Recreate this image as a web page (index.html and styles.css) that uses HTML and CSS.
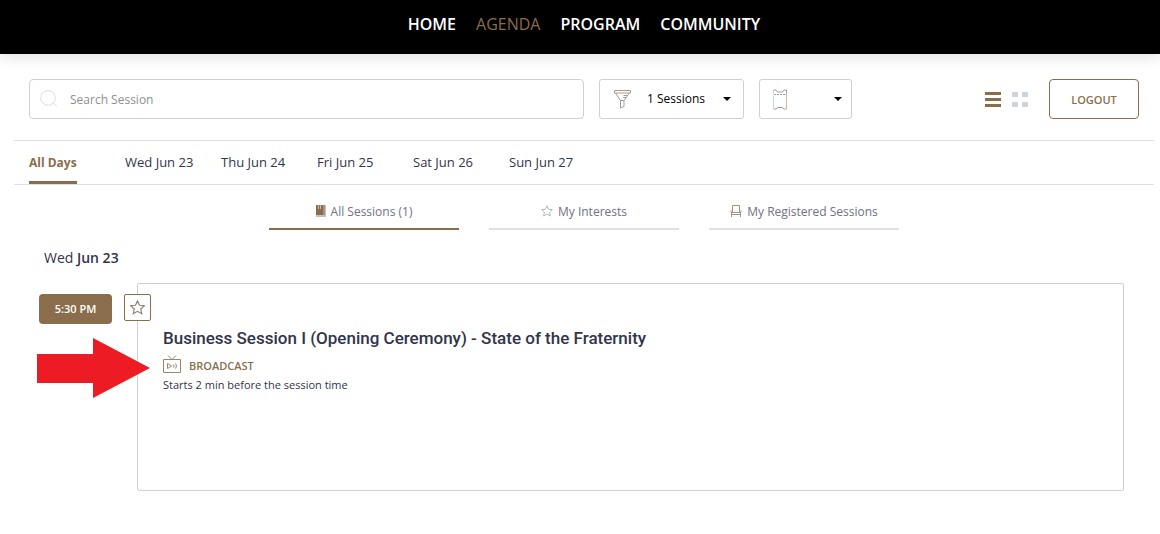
FILE: index.html
```html
<!DOCTYPE html>
<html lang="en">
<head>
  <meta charset="UTF-8">
  <meta name="viewport" content="width=device-width, initial-scale=1.0">
  <title>Agenda</title>
  <link rel="stylesheet" href="styles.css">
</head>
<body>
  <header class="header">
    <nav class="nav">
      <a href="#">HOME</a>
      <a href="#" class="current">AGENDA</a>
      <a href="#">PROGRAM</a>
      <a href="#">COMMUNITY</a>
    </nav>
  </header>

  <main class="page">
    <!-- search and filters -->
    <div class="toolbar">
      <div class="search">
        <svg width="18" height="18" viewBox="0 0 18 18"><circle cx="8" cy="8" r="7.3"/><path d="M13.2 13.2L17 16.6"/></svg>
        <input type="text" placeholder="Search Session" aria-label="Search Session">
      </div>
      <div class="filter">
        <svg width="17" height="20" viewBox="0 0 17 20"><path d="M.5 1.500h16v2.500h-16zM1.500 4l5 7.500v7.500l3.500-1.500v-6l5.500-7.500M6.500 11.500h3.500M9.500 6.500h3.500M9 8.500h3"/></svg>
        <select aria-label="Sessions"><option>1 Sessions</option></select>
      </div>
      <div class="filter ticket">
        <svg width="16" height="21" viewBox="0 0 16 21"><path stroke="#a49c94" d="M1.500 1h2.500q1 2 2 2h4q1 0 2-2h2.500v3.500l-.5 1 .5 1v13.500h-3q-.5-1.500-1.500-1.500h-4q-1 0-1.500 1.500h-3"/><path stroke="#b9dde8" d="M1.500 1v3.500l.5 1-.5 1V20"/><path stroke="#dfb79f" d="M14.500 7v13"/><path class="tear" d="M2 5.500h12"/></svg>
        <select aria-label="Ticket"><option></option></select>
      </div>
      <div class="actions">
        <button class="view" type="button" aria-label="List view">
          <svg width="16" height="15" viewBox="0 0 16 15"><path fill="#8a6e4b" d="M0 0h16v3H0zM0 6h16v3H0zM0 12h16v3H0z"/></svg>
        </button>
        <button class="view" type="button" aria-label="Grid view">
          <svg width="16" height="15" viewBox="0 0 16 15"><path fill="#cfd3dc" d="M0 0h6v5H0zM10 0h6v5h-6zM0 10h6v5H0zM10 10h6v5h-6z"/></svg>
        </button>
        <button class="logout" type="button">LOGOUT</button>
      </div>
    </div>

    <!-- days -->
    <nav class="days">
      <a href="#" class="on">All Days</a>
      <a href="#">Wed Jun 23</a>
      <a href="#">Thu Jun 24</a>
      <a href="#">Fri Jun 25</a>
      <a href="#">Sat Jun 26</a>
      <a href="#">Sun Jun 27</a>
    </nav>

    <nav class="tabs">
      <a href="#" class="on">
        <svg width="10" height="12" viewBox="0 0 10 12"><path fill="#c3bdc6" d="M0 0h10v12H0z"/><path fill="#8a6e4b" d="M0 0h7v10H0z"/><path fill="#a58f93" d="M7 0h2v10H7z"/><path fill="#c9b9a4" d="M2 0h1v4H2zM4 0h1v4H4z"/></svg>
        All Sessions (1)
      </a>
      <a href="#">
        <svg width="12" height="12" viewBox="0 0 24 24"><path fill="none" stroke="#a9b0ba" stroke-width="1.800" d="M12 1.500l3.200 7 7.600.8-5.700 5.100 1.700 7.600-6.800-3.900L5.200 22l1.700-7.600L1.200 9.300l7.600-.8z"/></svg>
        My Interests
      </a>
      <a href="#">
        <svg width="12" height="12" viewBox="0 0 12 12"><path fill="none" stroke="#a3937f" d="M2.500 7.500v-7h7v7M1 5.500v2h10v-2M1 9.500h10M1.500 7.500V12M10.500 7.500V12"/></svg>
        My Registered Sessions
      </a>
    </nav>

    <h2 class="date">Wed <b>Jun 23</b></h2>

    <section class="slot">
      <div class="time">5:30 PM</div>
      <article class="card">
        <button class="star" type="button" aria-label="Add to my interests">
          <svg width="15" height="15" viewBox="0 0 24 24"><path fill="none" stroke="#8a7c70" stroke-width="1.800" d="M12 1.500l3.200 7 7.600.8-5.700 5.100 1.700 7.600-6.800-3.900L5.200 22l1.700-7.600L1.200 9.300l7.600-.8z"/></svg>
        </button>
        <h3>Business Session I (Opening Ceremony) - State of the Fraternity</h3>
        <p class="broadcast">
          <svg width="19" height="18" viewBox="0 0 19 18"><path d="M.5 4.500h17v13H.5zM5 .5l4 4 4-4M4.500 8.500v5l4-2.500zM10.500 9.500q1 1.500 0 3M12.500 8.500q2 2.500 0 5"/></svg>
          BROADCAST
        </p>
        <p class="note">Starts 2 min before the session time</p>
      </article>
      <svg class="arrow" width="113" height="60" viewBox="0 0 113 60"><path d="M0 16h56V0l57 30-57 30V45H0z"/></svg>
    </section>
  </main>
</body>
</html>
```
FILE: styles.css
```css
*{margin: 0; padding: 0; box-sizing: border-box;}
body{
  background: #fff;
  color: #31344b;
  font-family: "Open Sans", "Noto Sans", sans-serif;
  font-size: 12px;
}
a{color: inherit; text-decoration: none;}
svg{display: block; flex: none;}
button, input, select{font: inherit; background: none;}
button{cursor: pointer;}

/* header */
.header{
  background: #000;
  padding: 0 6px 0 14px;
  box-shadow: 0 2px 16px rgba(0,0,0,0.14);
}
.nav{
  display: flex;
  justify-content: center;
  gap: 20px;
  height: 54px;
  line-height: 48px;
  font-size: 16px;
  font-weight: 600;
  color: #fff;
}
.nav .current{color: #8a6e4b; font-weight: 400;}

.page{margin: 0 6px 0 14px;}

/* toolbar */
.toolbar{
  display: flex;
  gap: 15px;
  padding: 25px 15px 21px;
}
.search{
  flex: 0 0 50%;
  display: flex;
  align-items: center;
  gap: 12px;
  height: 40px;
  padding: 0 10px;
  border: 1px solid #cfcfdc;
  border-radius: 4px;
}
.search svg{fill: none; stroke: #dcdee6;}
.search input{flex: 1; border: 0; outline: 0;}
.search input::placeholder{color: #8f8f8f;}
.filter{
  flex: none;
  display: flex;
  align-items: center;
  position: relative;
  width: 145px; height: 40px;
  padding-left: 14px;
  border: 1px solid #cfcfdc;
  border-radius: 3px;
}
.filter svg{fill: none; stroke: #a49c94;}
.filter .tear{stroke-dasharray: 2 1;}
.filter select{
  flex: 1;
  height: 36px;
  padding: 0 0 2px 16px;
  border: 0;
  color: #000;
  appearance: none;
}
/* caret */
.filter::after{
  content: "";
  position: absolute; top: 17px; right: 12px;
  border: 4px solid transparent;
  border-top-color: #000;
  border-bottom: 0;
  pointer-events: none;
}
.ticket{width: 93px; padding-left: 12px;}
.ticket::after{right: 9px;}
.actions{
  display: flex;
  align-items: center;
  gap: 11px;
  margin-left: auto;
}
.view{border: 0;}
.logout{
  width: 90px; height: 40px;
  margin-left: 10px;
  border: 1px solid #8a6e4b;
  border-radius: 4px;
  color: #8a6e4b;
  font-size: 11px;
  font-weight: 600;
}

/* days */
.days{
  display: grid;
  grid-template-columns: repeat(6, 96px);
  justify-items: start;
  height: 45px;
  padding: 0 15px;
  border-top: 1px solid #dfdfe7;
  border-bottom: 1px solid #dfdfe7;
  line-height: 43px;
  font-size: 13px;
}
.days .on{
  height: 43px;
  color: #8a6e4b;
  font-size: 12px;
  font-weight: 700;
  border-bottom: 3px solid #8a6e4b;
}

/* tabs */
.tabs{
  display: flex;
  justify-content: center;
  gap: 30px;
  margin-top: 9px;
}
.tabs a{
  display: flex;
  justify-content: center;
  align-items: center;
  gap: 5px;
  width: 190px; height: 36px;
  border-bottom: 2px solid #dfdfe7;
  color: #6f7280;
}
.tabs .on{border-color: #8a6e4b;}

/* sessions */
.date{
  margin: 16px 30px 0;
  line-height: 24px;
  font-size: 14px;
  font-weight: 400;
}
.date b{font-weight: 600;}
.slot{
  display: flex;
  align-items: flex-start;
  gap: 25px;
  position: relative;
  margin: 13px 30px 0 25px;
}
.time{
  width: 73px;
  margin-top: 11px;
  background: #8a6e4b;
  border-radius: 4px;
  color: #fff;
  text-align: center;
  line-height: 30px;
  font-weight: 600;
  font-size: 11px;
}
.card{
  flex: 1;
  position: relative;
  min-height: 208px;
  padding: 42px 25px;
  border: 1px solid #cfcfdc;
  border-radius: 2px;
}
.star{
  display: flex;
  justify-content: center;
  align-items: center;
  position: absolute; left: -14px; top: 10px;
  width: 27px; height: 27px;
  background: #fff;
  border: 1px solid #8a6e4b;
  border-radius: 2px;
}
.card h3{
  line-height: 24px;
  font-family: Roboto, sans-serif;
  font-size: 17px;
  font-weight: 500;
}
.broadcast{
  display: flex;
  gap: 7px;
  margin-top: 5px;
  line-height: 22px;
  color: #8a6e4b;
  font-size: 11px;
  font-weight: 600;
}
.broadcast svg{fill: none; stroke: #9c8465;}
.note{line-height: 16px; font-size: 11px;}
.arrow{position: absolute; left: -2px; top: 55px; fill: #ed1c24;}
```
